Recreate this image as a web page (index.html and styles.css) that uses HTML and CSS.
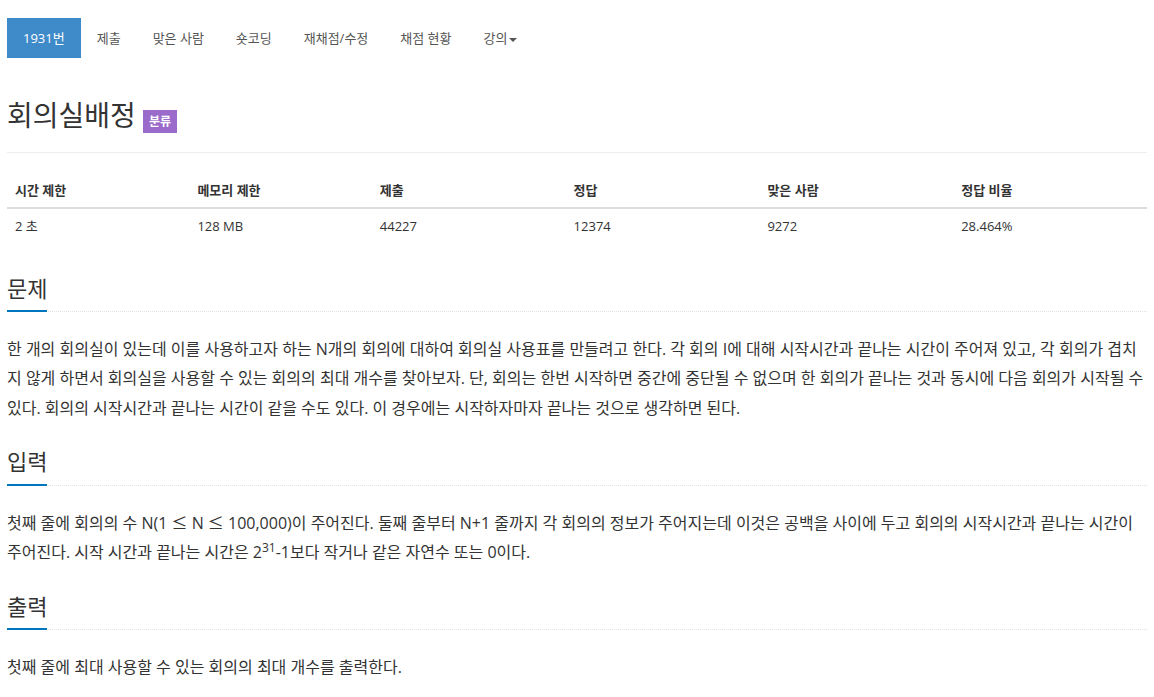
FILE: index.html
```html
<!DOCTYPE html>
<html lang="ko">

<head>
    <meta charset="UTF-8">
    <title>1931번: 회의실배정</title>
    <link rel="stylesheet" href="styles.css">
</head>

<body>
    <div class="container">
        <ul class="tabs">
            <li class="active"><a href="#">1931번</a></li>
            <li><a href="#">제출</a></li>
            <li><a href="#">맞은 사람</a></li>
            <li><a href="#">숏코딩</a></li>
            <li><a href="#">재채점/수정</a></li>
            <li><a href="#">채점 현황</a></li>
            <li><a href="#">강의<span class="caret"></span></a></li>
        </ul>

        <div class="page-header">
            <h1>회의실배정 <span class="label">분류</span></h1>
        </div>

        <table class="info">
            <colgroup>
                <col class="narrow">
                <col class="narrow">
                <col>
                <col>
                <col>
                <col>
            </colgroup>
            <thead>
                <tr>
                    <th>시간 제한</th>
                    <th>메모리 제한</th>
                    <th>제출</th>
                    <th>정답</th>
                    <th>맞은 사람</th>
                    <th>정답 비율</th>
                </tr>
            </thead>
            <tbody>
                <tr>
                    <td>2 초 </td>
                    <td>128 MB</td>
                    <td>44227</td>
                    <td>12374</td>
                    <td>9272</td>
                    <td>28.464%</td>
                </tr>
            </tbody>
        </table>

        <section class="problem">
            <div class="headline">
                <h2>문제</h2>
            </div>
            <p>한 개의 회의실이 있는데 이를 사용하고자 하는 N개의 회의에 대하여 회의실 사용표를 만들려고 한다. 각 회의 I에 대해 시작시간과 끝나는 시간이 주어져 있고, 각 회의가 겹치지 않게 하면서 회의실을 사용할 수 있는 회의의 최대 개수를 찾아보자. 단, 회의는 한번 시작하면 중간에 중단될 수 없으며 한 회의가 끝나는 것과 동시에 다음 회의가 시작될 수 있다. 회의의 시작시간과 끝나는 시간이 같을 수도 있다. 이 경우에는 시작하자마자 끝나는 것으로 생각하면 된다.</p>
        </section>

        <section class="problem">
            <div class="headline">
                <h2>입력</h2>
            </div>
            <p>첫째 줄에 회의의 수 N(1 <span class="sym">&le;</span> N <span class="sym">&le;</span> 100,000)이 주어진다. 둘째 줄부터 N+1 줄까지 각 회의의 정보가 주어지는데 이것은 공백을 사이에 두고 회의의 시작시간과 끝나는 시간이 주어진다. 시작 시간과 끝나는 시간은 2<sup>31</sup>-1보다 작거나 같은 자연수 또는 0이다.</p>
        </section>

        <section class="problem">
            <div class="headline">
                <h2>출력</h2>
            </div>
            <p>첫째 줄에 최대 사용할 수 있는 회의의 최대 개수를 출력한다.</p>
        </section>
    </div>
</body>

</html>
```

FILE: styles.css
```css
body {
    margin: 0;
    font-family: "Open Sans", "Noto Sans CJK KR", sans-serif;
    color: #333;
    background: #fff;
}

.container {
    padding: 18px 7px 0;
}

/* top tabs */
.tabs {
    display: flex;
    list-style: none;
    margin: 0;
    padding: 0;
}

.tabs a {
    display: block;
    height: 40px;
    line-height: 40px;
    padding: 0 16px;
    font-size: 13px;
    color: #555;
    text-decoration: none;
}

.tabs .active a {
    background: #3f8ac9;
    color: #fff;
}

.caret {
    display: inline-block;
    width: 0;
    height: 0;
    margin-left: 2px;
    vertical-align: middle;
    border-top: 4px solid #555;
    border-left: 4px solid transparent;
    border-right: 4px solid transparent;
}

/* title */
.page-header {
    margin-top: 42px;
    padding-bottom: 21px;
    border-bottom: 1px solid #eee;
}

h1 {
    margin: 0;
    font-size: 28px;
    font-weight: 400;
    line-height: 1.1;
    color: #333;
}

.label {
    display: inline-block;
    vertical-align: middle;
    padding: 0 6px;
    height: 23px;
    line-height: 23px;
    font-size: 12px;
    font-weight: 700;
    color: #fff;
    background: #9b6bcc;
    position: relative;
    top: 3px;
}

/* limits table */
.info {
    width: 100%;
    table-layout: fixed;
    border-collapse: collapse;
    margin-top: 20px;
    font-size: 13px;
}

.info col {
    width: 17%;
}

.info col.narrow {
    width: 16%;
}

.info th,
.info td {
    text-align: left;
    padding: 8px;
    line-height: 18.5px;
}

.info th {
    font-weight: 700;
    border-bottom: 2px solid #ddd;
}

/* problem sections */
.problem {
    margin-top: 26px;
}

.info + .problem {
    margin-top: 32px;
}

.headline {
    border-bottom: 1px dotted #dde1ea;
}

.headline h2 {
    display: inline-block;
    margin: 0 0 -1px;
    padding-bottom: 10px;
    font-size: 22px;
    font-weight: 400;
    line-height: 1.1;
    border-bottom: 2px solid #0076c0;
}

.problem p {
    margin: 23px 0 0;
    font-size: 16px;
    line-height: 29.5px;
}

.sym {
    font-family: "Noto Sans CJK KR", sans-serif;
    line-height: 1;
}

sup {
    font-size: 12px;
    line-height: 1;
    vertical-align: super;
}
```
